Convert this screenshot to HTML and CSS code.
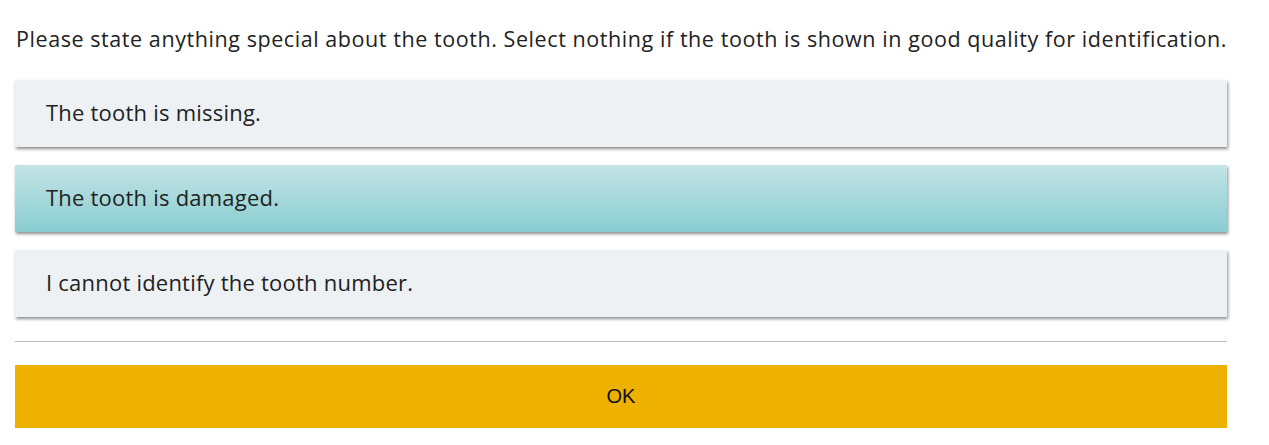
FILE: index.html
```html
<!DOCTYPE html>
<html>
<head>
<meta charset="utf-8">
<link rel="stylesheet" href="styles.css">
</head>
<body>
<div class="page">
  <p class="question">Please state anything special about the tooth. Select nothing if the tooth is shown in good quality for identification.</p>
  <div class="options">
    <div class="option">The tooth is missing.</div>
    <div class="option selected">The tooth is damaged.</div>
    <div class="option">I cannot identify the tooth number.</div>
  </div>
  <hr class="divider">
  <div class="ok">OK</div>
</div>
</body>
</html>
```
FILE: styles.css
```css
html, body {
  margin: 0;
  padding: 0;
  background: #fff;
}
.page {
  width: 1212px;
  margin-left: 15px;
  padding-top: 24px;
  font-family: "Open Sans", "Noto Sans", sans-serif;
  color: #222;
}
.question {
  margin: 0 0 0 1px;
  font-size: 21.5px;
  letter-spacing: 0.57px;
  line-height: 30px;
  white-space: nowrap;
}
.options {
  display: flex;
  flex-direction: column;
  gap: 18px;
  margin-top: 26px;
}
.option {
  height: 67px;
  box-sizing: border-box;
  display: flex;
  align-items: center;
  padding-left: 31px;
  padding-bottom: 3px;
  background: #edf1f4;
  box-shadow: 1px 2px 3px rgba(0, 0, 0, 0.45);
  font-size: 22px;
  letter-spacing: 0.22px;
  color: #222;
}
.option.selected {
  background: linear-gradient(to bottom, #c3e4e6, #89cdd1);
}
.divider {
  border: 0;
  border-top: 1px solid #bdbdbd;
  margin: 24px 0 23px 0;
}
.ok {
  height: 63px;
  background: #efb100;
  display: flex;
  align-items: center;
  justify-content: center;
  font-family: "Liberation Sans", Arial, sans-serif;
  font-size: 20px;
  color: #111;
}
```
